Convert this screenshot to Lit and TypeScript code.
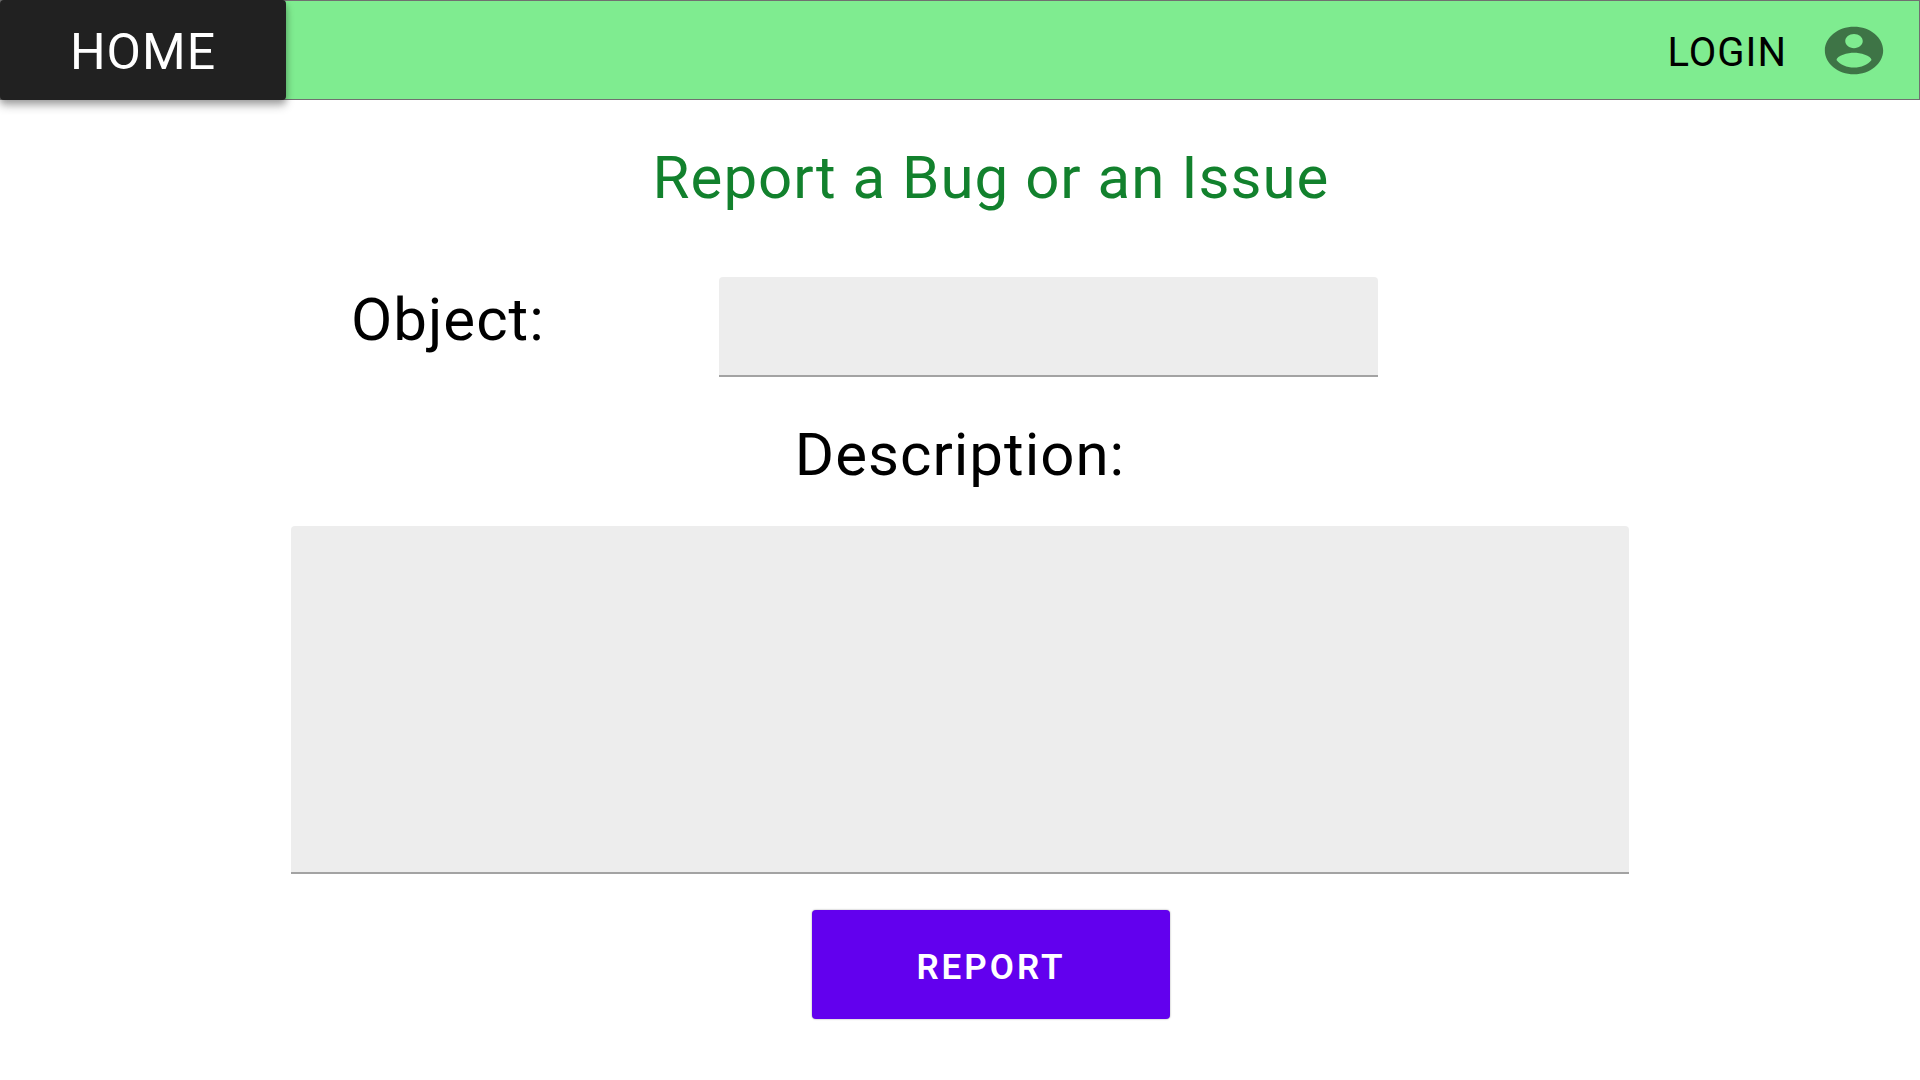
import { LitElement, html, css } from "lit";
import { customElement } from "lit/decorators.js";

@customElement("app-header")
class AppHeader extends LitElement {
  static styles = css`
    :host {
      display: block;
    }
    .bar {
      display: flex;
      justify-content: space-between;
      height: 100px;
      box-sizing: border-box;
      background: #7fec90;
      box-shadow: inset 0 0 0 1px #707070;
    }
    .home {
      display: flex;
      align-items: center;
      justify-content: center;
      width: 286px;
      box-sizing: border-box;
      padding-top: 4px;
      border-radius: 4px;
      background: #212121;
      color: #fff;
      font-size: 50px;
      text-decoration: none;
      box-shadow: 0 3px 6px rgba(0, 0, 0, 0.2), 0 6px 10px rgba(0, 0, 0, 0.24);
    }
    .account {
      display: flex;
      align-items: center;
      gap: 32px;
      padding-right: 31px;
      color: #000;
      text-decoration: none;
      font-size: 40px;
    }
    .login {
      padding-top: 4px;
    }
    .avatar {
      width: 70px;
      height: 57px;
      fill: rgba(0, 0, 0, 0.51);
    }
  `;

  render() {
    return html`
      <header class="bar">
        <a class="home" href="#home">HOME</a>
        <a class="account" href="#login">
          <span class="login">LOGIN</span>
          <svg class="avatar" viewBox="0 0 24 24" preserveAspectRatio="none" aria-hidden="true">
            <path
              d="M12 2C6.48 2 2 6.48 2 12s4.48 10 10 10 10-4.48 10-10S17.52 2 12 2zm0 3c1.66 0 3 1.34 3 3s-1.34 3-3 3-3-1.34-3-3 1.34-3 3-3zm0 14.2c-2.5 0-4.71-1.28-6-3.22.03-1.99 4-3.08 6-3.08 1.99 0 5.97 1.09 6 3.08-1.29 1.94-3.5 3.22-6 3.22z"
            />
          </svg>
        </a>
      </header>
    `;
  }
}

@customElement("report-form")
class ReportForm extends LitElement {
  static styles = css`
    :host {
      display: block;
    }
    .form {
      display: flex;
      flex-direction: column;
      padding: 42px 291px 60px;
      font-size: 60px;
      line-height: 72px;
      color: #000;
    }
    .title {
      margin: 0 0 63px;
      padding-left: 62px;
      font: inherit;
      text-align: center;
      color: #12812d;
    }
    .row {
      display: grid;
      grid-template-columns: 368px 1fr;
      align-items: start;
      padding: 0 251px 0 60px;
      margin-bottom: 42px;
    }
    .object {
      line-height: 86px;
    }
    .description {
      align-self: center;
      margin-bottom: 35px;
    }
    .field {
      display: block;
      width: 100%;
      box-sizing: border-box;
      margin: 0;
      padding: 16px;
      border: 0;
      border-bottom: 2px solid #a3a3a3;
      border-radius: 4px 4px 0 0;
      background: #ededed;
      font-family: inherit;
      font-size: 40px;
      color: #000;
      resize: none;
    }
    .short {
      height: 100px;
    }
    .long {
      height: 348px;
      margin-bottom: 36px;
    }
    .actions {
      display: flex;
      justify-content: center;
      padding-left: 62px;
    }
    .submit {
      width: 358px;
      height: 109px;
      padding: 6px 0 0;
      border: 0;
      border-radius: 4px;
      background: #6200ee;
      color: #fff;
      font-family: inherit;
      font-size: 35px;
      font-weight: 600;
      letter-spacing: 3px;
      box-shadow: 0 0 2px rgba(0, 0, 0, 0.4);
    }
  `;

  render() {
    return html`
      <form class="form" @submit=${(e: Event) => e.preventDefault()}>
        <h1 class="title">Report a Bug or an Issue</h1>
        <div class="row">
          <label class="object" for="object">Object:</label>
          <input class="field short" id="object" type="text" />
        </div>
        <label class="description" for="description">Description:</label>
        <textarea class="field long" id="description"></textarea>
        <div class="actions">
          <button class="submit" type="submit">REPORT</button>
        </div>
      </form>
    `;
  }
}

@customElement("app-root")
class AppRoot extends LitElement {
  static styles = css`
    :host {
      display: block;
      min-height: 100vh;
      background: #fff;
      font-family: Roboto, "Liberation Sans", sans-serif;
      letter-spacing: 1px;
    }
  `;

  render() {
    return html`
      <app-header></app-header>
      <main><report-form></report-form></main>
    `;
  }
}
